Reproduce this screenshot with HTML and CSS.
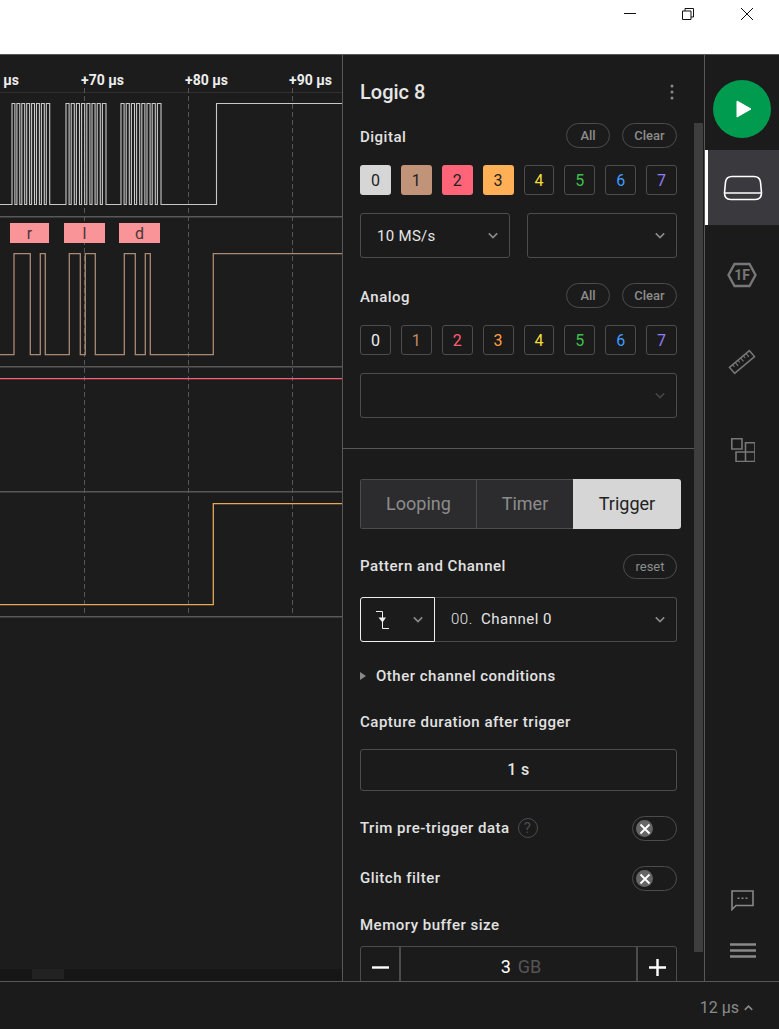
FILE: index.html
```html
<!doctype html>
<html lang="en">

<head>
  <title>Logic 8</title>
  <meta charset="utf-8" />
  <link rel="stylesheet" href="styles.css">
</head>

<body>
  <svg class="defs" aria-hidden="true">
    <symbol id="chevron" viewBox="0 0 12 8">
      <path d="M1 1.500 6 6.500 11 1.500" fill="none" stroke="currentColor" stroke-width="2" />
    </symbol>
    <symbol id="cross" viewBox="0 0 12 12">
      <path d="M1.500 1.500 10.500 10.500M10.500 1.500 1.500 10.500" fill="none" stroke="#fff" stroke-width="1.800" />
    </symbol>
  </svg>

  <header class="titlebar">
    <span class="win-btn">
      <svg width="12" height="12" viewBox="0 0 12 12"><path d="M0 5.500H12" stroke="#111" /></svg>
    </span>
    <span class="win-btn">
      <svg width="12" height="12" viewBox="0 0 12 12"><path d="M.5 3h8.500v8.500H.5zM3 3V.5h8.500V9H9" fill="none" stroke="#111" /></svg>
    </span>
    <span class="win-btn">
      <svg width="12" height="12" viewBox="0 0 12 12"><path d="M0 0 12 12M12 0 0 12" stroke="#111" /></svg>
    </span>
  </header>

  <main class="main">
    <section class="wave">
      <!-- viewBox uses page coordinates so the traces are easy to measure -->
      <svg class="traces" viewBox="0 55 342 914">
        <path d="M0 92.500H342" stroke="#303030" />
        <g stroke="#555" stroke-dasharray="5 3">
          <path d="M84.500 88V615" />
          <path d="M188.500 88V615" />
          <path d="M292.500 88V615" />
        </g>
        <g stroke="#58585a" stroke-width="1.500">
          <path d="M0 216.700H342" />
          <path d="M0 366.800H342" />
          <path d="M0 491.800H342" />
          <path d="M0 616.800H342" />
        </g>
        <g class="ticks">
          <text x="-24" y="85">+60 µs</text>
          <text x="81" y="85">+70 µs</text>
          <text x="185" y="85">+80 µs</text>
          <text x="289" y="85">+90 µs</text>
        </g>

        <path class="trace ch0" d="M0 204.500H12
          V103.500h2.900V204.500h2V103.500h2.900V204.500h2V103.500h2.900V204.500h2V103.500h2.900V204.500h2
          V103.500h2.900V204.500h2V103.500h2.900V204.500h2V103.500h2.900V204.500h2V103.500h3.400V204.500H66
          V103.500h3.100V204.500h2.100V103.500h3.100V204.500h2.100V103.500h3.100V204.500h2.100V103.500h3.100V204.500h2.100
          V103.500h3.100V204.500h2.100V103.500h3.100V204.500h2.100V103.500h3.100V204.500h2.100V103.500h3.600V204.500H121
          V103.500h3.100V204.500h2.100V103.500h3.100V204.500h2.100V103.500h3.100V204.500h2.100V103.500h3.100V204.500h2.100
          V103.500h3.100V204.500h2.100V103.500h3.100V204.500h2.100V103.500h3.100V204.500h2.100V103.500h3.600V204.500H216.500V103.500H342" />
        <path class="trace ch1" d="M0 354.700H14V253.700H30.300V354.700H40.300V253.700H45.300V354.700H69.300V253.700H80.300V354.700H85.300V253.700H95.300V354.700H124.300V253.700H135.300V354.700H145.300V253.700H150.300V354.700H213.300V253.700H342" />
        <path class="trace ch2" d="M0 378.700H342" />
        <path class="trace ch3" d="M0 604.700H213.300V503.700H342" />

        <g class="frame">
          <rect x="10" y="223" width="39" height="20" />
          <rect x="64" y="223" width="41" height="20" />
          <rect x="119" y="223" width="41" height="20" />
        </g>
        <g class="frame-text">
          <text x="29.500" y="238.500">r</text>
          <text x="84.500" y="238.500">l</text>
          <text x="139.500" y="238.500">d</text>
        </g>
      </svg>
      <div class="hscroll"><span class="hscroll-thumb"></span></div>
    </section>

    <aside class="panel">
      <div class="panel-head">
        <h1 class="device-name">Logic 8</h1>
        <svg class="kebab" width="4" height="16" viewBox="0 0 4 16">
          <circle cx="2" cy="2" r="1.500" />
          <circle cx="2" cy="8" r="1.500" />
          <circle cx="2" cy="14" r="1.500" />
        </svg>
      </div>

      <div class="panel-body">
        <div class="settings">
          <div class="row channels">
            <span class="label">Digital</span>
            <span class="pills"><span class="pill pill-all">All</span><span class="pill pill-clear">Clear</span></span>
          </div>
          <div class="chips">
            <span class="chip on c0">0</span>
            <span class="chip on c1">1</span>
            <span class="chip on c2">2</span>
            <span class="chip on c3">3</span>
            <span class="chip c4">4</span>
            <span class="chip c5">5</span>
            <span class="chip c6">6</span>
            <span class="chip c7">7</span>
          </div>
          <div class="select-pair">
            <div class="select">10 MS/s<svg class="chev"><use href="#chevron" /></svg></div>
            <div class="select"><svg class="chev"><use href="#chevron" /></svg></div>
          </div>

          <div class="row channels analog">
            <span class="label">Analog</span>
            <span class="pills"><span class="pill pill-all">All</span><span class="pill pill-clear">Clear</span></span>
          </div>
          <div class="chips">
            <span class="chip a0">0</span>
            <span class="chip a1">1</span>
            <span class="chip a2">2</span>
            <span class="chip a3">3</span>
            <span class="chip c4">4</span>
            <span class="chip c5">5</span>
            <span class="chip c6">6</span>
            <span class="chip c7">7</span>
          </div>
          <div class="select select-wide">
            <svg class="chev chev-dim"><use href="#chevron" /></svg>
          </div>

          <hr class="divider" />

          <div class="tabs">
            <span class="tab tab-looping">Looping</span>
            <span class="tab tab-timer">Timer</span>
            <span class="tab tab-trigger">Trigger</span>
          </div>

          <div class="row pattern">
            <span class="label">Pattern and Channel</span>
            <span class="pill pill-reset">reset</span>
          </div>
          <div class="channel">
            <div class="edge">
              <svg width="13" height="18" viewBox="0 0 13 18">
                <path d="M0 .5H6.500V17.500H13" fill="none" stroke="#eee" />
                <path d="M2.500 6.500H10L6.500 11.500z" fill="#eee" />
              </svg>
              <svg class="chev"><use href="#chevron" /></svg>
            </div>
            <div class="channel-name">
              <span class="channel-num">00.</span>Channel 0
              <svg class="chev"><use href="#chevron" /></svg>
            </div>
          </div>

          <div class="label conditions"><span class="caret"></span>Other channel conditions</div>

          <div class="label capture">Capture duration after trigger</div>
          <div class="duration">1 s</div>

          <div class="row toggle-row">
            <span class="label">Trim pre-trigger data<span class="help">?</span></span>
            <span class="toggle"><span class="knob"><svg width="12" height="12"><use href="#cross" /></svg></span></span>
          </div>
          <div class="row toggle-row">
            <span class="label">Glitch filter</span>
            <span class="toggle"><span class="knob"><svg width="12" height="12"><use href="#cross" /></svg></span></span>
          </div>

          <div class="label memory">Memory buffer size</div>
          <div class="stepper">
            <span class="step"><svg width="17" height="17" viewBox="0 0 17 17"><path d="M0 8.500H17" stroke="#fff" stroke-width="2.400" /></svg></span>
            <span class="step-value">3<span class="unit">GB</span></span>
            <span class="step"><svg width="17" height="17" viewBox="0 0 17 17"><path d="M0 8.500H17M8.500 0V17" stroke="#fff" stroke-width="2.400" /></svg></span>
          </div>
        </div>
        <div class="scrollbar"></div>
      </div>
    </aside>

    <nav class="rail">
      <div class="play">
        <svg width="16" height="18" viewBox="0 0 16 18"><path d="M1 1 15 9 1 17z" fill="#fff" stroke="#fff" stroke-linejoin="round" /></svg>
      </div>
      <div class="rail-item active">
        <svg width="40" height="26" viewBox="0 0 40 26">
          <path d="M9 1.500H31C35 1.500 37 3.500 37.500 7L38.500 18C38.500 22 36.500 24.500 32.500 24.500H7.500C3.500 24.500 1.500 22 1.500 18L2.500 7C3 3.500 5 1.500 9 1.500Z" fill="none" stroke="#fff" stroke-width="1.600" />
          <path d="M2 18H38" stroke="#fff" stroke-width="1.600" />
        </svg>
      </div>
      <div class="rail-item">
        <svg width="30" height="26" viewBox="0 0 30 26">
          <path d="M1.500 13 7.500 2H22.500L28.500 13 22.500 24H7.500Z" fill="none" stroke="#777" stroke-width="2.400" />
          <text class="hex-text" x="15" y="18">1F</text>
        </svg>
      </div>
      <div class="rail-item">
        <svg width="28" height="26" viewBox="0 0 28 26">
          <g transform="rotate(-40 14 13)" fill="none" stroke="#777" stroke-width="1.500">
            <rect x="1" y="9" width="26" height="8" />
            <path d="M5 9V12M8.500 9V13.500M12 9V12M15.500 9V13.500M19 9V12M22.500 9V13.500" stroke-width="1.100" />
          </g>
        </svg>
      </div>
      <div class="rail-item item-ext">
        <svg width="24" height="24" viewBox="0 0 24 24">
          <path d="M.8 .8H11V11H.8ZM14.500 4.700H24V14H14.500ZM5 14H14.500V23.500H5ZM14.500 14H24V23.500H14.500Z" fill="none" stroke="#777" stroke-width="1.600" />
        </svg>
      </div>

      <div class="rail-bottom">
        <svg width="23" height="21" viewBox="0 0 23 21">
          <path d="M1 1H22V15.500H5L1 19.500Z" fill="none" stroke="#888" stroke-width="1.600" />
          <path d="M6.500 8.200H8.500M10.500 8.200H12.500M14.500 8.200H16.500" stroke="#888" stroke-width="1.600" />
        </svg>
        <svg class="burger" width="26" height="15" viewBox="0 0 26 15">
          <path d="M0 1.500H26M0 7.500H26M0 13.500H26" stroke="#888" stroke-width="2.500" />
        </svg>
      </div>
    </nav>
  </main>

  <footer class="statusbar">
    12 µs
    <svg class="status-chev"><use href="#chevron" /></svg>
  </footer>
</body>

</html>
```

FILE: styles.css
```css
html,
body {
  margin: 0;
  height: 100%;
}

body {
  display: flex;
  flex-direction: column;
  overflow: hidden;
  background-color: #1b1b1b;
  color: #e6e6e6;
  font-family: Roboto, "Liberation Sans", sans-serif;
  font-size: 14px;
}

.defs {
  display: none;
}

/* window frame */
.titlebar {
  display: flex;
  justify-content: flex-end;
  flex: none;
  height: 54px;
  padding-right: 3px;
  background-color: #fff;
}

.win-btn {
  display: flex;
  justify-content: center;
  width: 58.500px;
  padding-top: 8px;
}

.win-btn svg {
  display: block;
}

.main {
  display: flex;
  flex: none;
  height: 926px;
  border-top: 1px solid #58585a;
  border-bottom: 1px solid #58585a;
  box-sizing: content-box;
}

/* waveform area */
.wave {
  display: flex;
  flex-direction: column;
  flex: none;
  width: 342px;
  border-right: 1px solid #58585a;
  background-color: #1c1c1c;
}

.traces {
  display: block;
  flex: 1;
  width: 342px;
  min-height: 0;
}

.ticks text {
  fill: #eee;
  font-size: 14px;
  font-weight: 700;
}

.trace {
  fill: none;
  stroke-width: 1.300;
}

.ch0 { stroke: #c8c8c8; stroke-width: 1.100; }
.ch1 { stroke: #ab8a75; }
.ch2 { stroke: #ff5f78; }
.ch3 { stroke: #e5a75a; }

.frame rect {
  fill: #f99598;
}

.frame-text text {
  fill: #4a3438;
  font-size: 16px;
  text-anchor: middle;
}

.hscroll {
  flex: none;
  height: 12px;
  background-color: #161616;
}

.hscroll-thumb {
  display: block;
  width: 32px;
  height: 10px;
  margin-left: 32px;
  background-color: #222;
}

/* device panel */
.panel {
  display: flex;
  flex-direction: column;
  flex: none;
  width: 361px;
  overflow: hidden;
  border-right: 1px solid #58585a;
}

.panel-head {
  display: flex;
  align-items: center;
  justify-content: space-between;
  flex: none;
  height: 24px;
  padding: 25px 30px 19px 17px;
}

.device-name {
  margin: 0;
  font-size: 20px;
  font-weight: 500;
}

.kebab {
  fill: #8a8a8a;
}

.panel-body {
  display: flex;
  flex: 1;
  min-height: 0;
}

.settings {
  flex: none;
  width: 351px;
  padding-left: 17px;
  box-sizing: border-box;
}

.settings > * {
  width: 317px;
}

.scrollbar {
  flex: none;
  width: 9px;
  height: 829px;
  background-color: #3e3e3e;
}

.row {
  display: flex;
  align-items: center;
  justify-content: space-between;
  height: 25px;
}

.label {
  display: flex;
  align-items: center;
  height: 20px;
  font-size: 15px;
  font-weight: 500;
  letter-spacing: .5px;
  color: #e2e2e2;
}

.channels > .label {
  margin-top: 2px;
}

.pattern > .label,
.toggle-row > .label {
  margin-bottom: 2px;
}

.pills {
  display: flex;
  gap: 12px;
}

.pill {
  display: flex;
  align-items: center;
  justify-content: center;
  height: 25px;
  box-sizing: border-box;
  border: 1px solid #4c4c4c;
  border-radius: 13px;
  color: #8c8c8c;
  font-size: 13px;
  font-weight: 500;
}

.pill-all { width: 44px; }
.pill-clear { width: 55px; }
.pill-reset { width: 54px; font-weight: 400; }

.chips {
  display: grid;
  grid-template-columns: repeat(8, 1fr);
  column-gap: 10px;
  margin-top: 17px;
}

.chip {
  display: flex;
  align-items: center;
  justify-content: center;
  height: 30px;
  box-sizing: border-box;
  border: 1px solid #4c4c4c;
  border-radius: 3px;
  font-size: 16px;
}

.chip.on {
  border: 0;
  color: #222;
}

.c0.on { background-color: #d6d6d6; }
.c1.on { background-color: #c19479; }
.c2.on { background-color: #ff6479; }
.c3.on { background-color: #ffaf55; }
.c4 { color: #f2dd38; }
.c5 { color: #3cc14c; }
.c6 { color: #3f9bff; }
.c7 { color: #8f7dff; }
.a0 { color: #eee; }
.a1 { color: #c18a63; }
.a2 { color: #ff5c70; }
.a3 { color: #ff9f45; }

.select-pair {
  display: flex;
  gap: 17px;
  margin-top: 18px;
}

.select {
  display: flex;
  align-items: center;
  justify-content: space-between;
  flex: 1;
  height: 45px;
  padding: 0 11px 0 16px;
  box-sizing: border-box;
  border: 1px solid #4c4c4c;
  border-radius: 3px;
  font-size: 15px;
  letter-spacing: .3px;
}

.select-pair .select:last-child {
  justify-content: flex-end;
}

.select-wide {
  justify-content: flex-end;
  margin-top: 18px;
}

.chev {
  flex: none;
  width: 10px;
  height: 7px;
  color: #8a8a8a;
}

.chev-dim {
  color: #444;
}

.analog {
  margin-top: 25px;
}

.divider {
  width: 351px;
  height: 1px;
  margin: 30px 0 0 -17px;
  border: 0;
  background-color: #58585a;
}

.settings > .tabs {
  display: flex;
  width: 321px;
  height: 50px;
  margin-top: 30px;
  overflow: hidden;
  box-sizing: border-box;
  border-radius: 3px;
}

.tab {
  display: flex;
  align-items: center;
  justify-content: center;
  padding-bottom: 2px;
  box-sizing: border-box;
  border: 1px solid #4c4c4c;
  border-right-width: 0;
  background-color: #2c2c2e;
  color: #8c8c8c;
  font-size: 18px;
}

.tab-looping { width: 116px; }
.tab-timer { width: 97px; }

.tab-trigger {
  width: 108px;
  border: 0;
  background-color: #d6d6d6;
  color: #222;
}

.pattern {
  margin-top: 25px;
}

.channel {
  display: flex;
  height: 45px;
  margin-top: 18px;
}

.edge {
  display: flex;
  align-items: center;
  justify-content: space-between;
  flex: none;
  width: 75px;
  padding: 0 11px 0 15px;
  box-sizing: border-box;
  border: 1px solid #eee;
  border-radius: 3px 0 0 3px;
}

.channel-name {
  display: flex;
  align-items: center;
  flex: 1;
  padding: 0 11px 2px 16px;
  box-sizing: border-box;
  border: 1px solid #4c4c4c;
  border-left: 0;
  border-radius: 0 3px 3px 0;
  font-size: 15px;
  letter-spacing: .5px;
}

.channel-name .chev {
  margin: 2px 0 0 auto;
}

.channel-num {
  width: 30px;
  font-weight: 300;
}

.conditions {
  margin-top: 24px;
}

.caret {
  width: 0;
  height: 0;
  margin-right: 10px;
  border-top: 4px solid transparent;
  border-bottom: 4px solid transparent;
  border-left: 6px solid #8a8a8a;
}

.capture {
  margin-top: 26px;
}

.duration {
  display: flex;
  align-items: center;
  justify-content: center;
  height: 42px;
  margin-top: 17px;
  padding-bottom: 2px;
  box-sizing: border-box;
  border: 1px solid #4c4c4c;
  border-radius: 3px;
  font-size: 16px;
  font-weight: 500;
  letter-spacing: .4px;
}

.toggle-row {
  margin-top: 25px;
}

.help {
  display: flex;
  align-items: center;
  justify-content: center;
  width: 18px;
  height: 18px;
  margin-left: 8px;
  border: 1px solid #4c4c4c;
  border-radius: 50%;
  color: #4c4c4c;
  font-weight: 400;
}

.toggle {
  display: flex;
  align-items: center;
  width: 45px;
  height: 25px;
  padding-left: 3px;
  box-sizing: border-box;
  border: 1px solid #4c4c4c;
  border-radius: 13px;
}

.knob {
  display: flex;
  align-items: center;
  justify-content: center;
  width: 17px;
  height: 17px;
  border-radius: 50%;
  background-color: #666;
}

.memory {
  margin-top: 24px;
}

.stepper {
  display: grid;
  grid-template-columns: 38px 1fr 38px;
  height: 45px;
  margin-top: 11px;
  box-sizing: border-box;
  border: 1px solid #4c4c4c;
  border-radius: 3px;
}

.step {
  display: flex;
  align-items: center;
  justify-content: center;
  padding-bottom: 2px;
}

.step-value {
  display: flex;
  align-items: baseline;
  justify-content: center;
  padding: 9px 0 0 5px;
  border-right: 2px solid #4c4c4c;
  border-left: 2px solid #4c4c4c;
  color: #fff;
  font-size: 18px;
}

.unit {
  margin-left: 7px;
  color: #555;
}

/* right rail */
.rail {
  display: flex;
  flex-direction: column;
  flex: 1;
  min-width: 0;
}

.play {
  display: flex;
  align-items: center;
  justify-content: center;
  flex: none;
  width: 58px;
  height: 58px;
  margin: 25px 0 12px 8px;
  padding-left: 3px;
  box-sizing: border-box;
  border-radius: 50%;
  background-color: #009b4e;
}

.rail-item {
  display: flex;
  align-items: center;
  justify-content: center;
  flex: none;
  height: 75px;
  margin-bottom: 12px;
  box-sizing: border-box;
  border-left: 3px solid transparent;
}

.rail-item.active {
  border-left-color: #fff;
  background-color: #3a3a3e;
}

.rail-item svg {
  margin-right: 3px;
}

.rail-item.active svg {
  margin-right: 1px;
}

.item-ext svg {
  margin: 3px 1px 0 0;
}

.hex-text {
  fill: #777;
  font-size: 14px;
  font-weight: 700;
  text-anchor: middle;
}

.rail-bottom {
  display: flex;
  flex-direction: column;
  align-items: center;
  gap: 32px;
  margin-top: auto;
  padding-bottom: 23px;
}

.burger {
  margin-left: 1px;
}

/* status bar */
.statusbar {
  display: flex;
  align-items: center;
  justify-content: flex-end;
  flex: 1;
  padding: 4px 26px 0 0;
  color: #8a8a8a;
  font-size: 16px;
}

.status-chev {
  width: 9px;
  height: 6px;
  margin-left: 5px;
  transform: rotate(180deg);
}
```
